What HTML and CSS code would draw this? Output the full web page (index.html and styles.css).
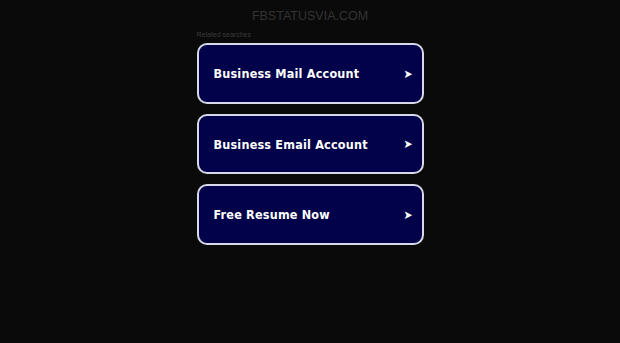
FILE: index.html
```html
<!DOCTYPE html>
<html>
<head>
<meta charset="utf-8">
<link rel="stylesheet" href="styles.css">
</head>
<body>
<div class="header">FBSTATUSVIA.COM</div>
<div class="wrap">
  <div class="label">Related searches</div>
  <a class="item" href="#"><span class="txt">Business Mail Account</span><span class="arr">➤</span></a>
  <a class="item" href="#"><span class="txt">Business Email Account</span><span class="arr">➤</span></a>
  <a class="item" href="#"><span class="txt">Free Resume Now</span><span class="arr">➤</span></a>
</div>
</body>
</html>
```
FILE: styles.css
```css
html, body {
  margin: 0;
  padding: 0;
  background: #0a0a0a;
}
body {
  font-family: "Liberation Sans", Arial, sans-serif;
}
.header {
  text-align: center;
  color: #333333;
  font-size: 12.5px;
  padding-top: 8px;
  height: 22px;
  line-height: 16px;
}
.wrap {
  width: 227px;
  margin: 0 auto;
  display: flex;
  flex-direction: column;
  gap: 10px;
}
.label {
  color: #3a3a3a;
  font-size: 7px;
  line-height: 10px;
  margin-bottom: -7px;
}
.item {
  display: flex;
  align-items: center;
  justify-content: space-between;
  height: 55.5px;
  box-sizing: content-box;
  border: 2px solid #d8d8e8;
  border-radius: 10px;
  background: #02024a;
  color: #ffffff;
  text-decoration: none;
  padding: 1px 9px 0 15px;
  font-family: "DejaVu Sans Condensed", "DejaVu Sans", sans-serif;
  font-stretch: condensed;
  font-weight: bold;
  font-size: 12.5px;
  letter-spacing: 0.2px;
}
.arr {
  font-size: 12px;
  letter-spacing: 0;
}
```
